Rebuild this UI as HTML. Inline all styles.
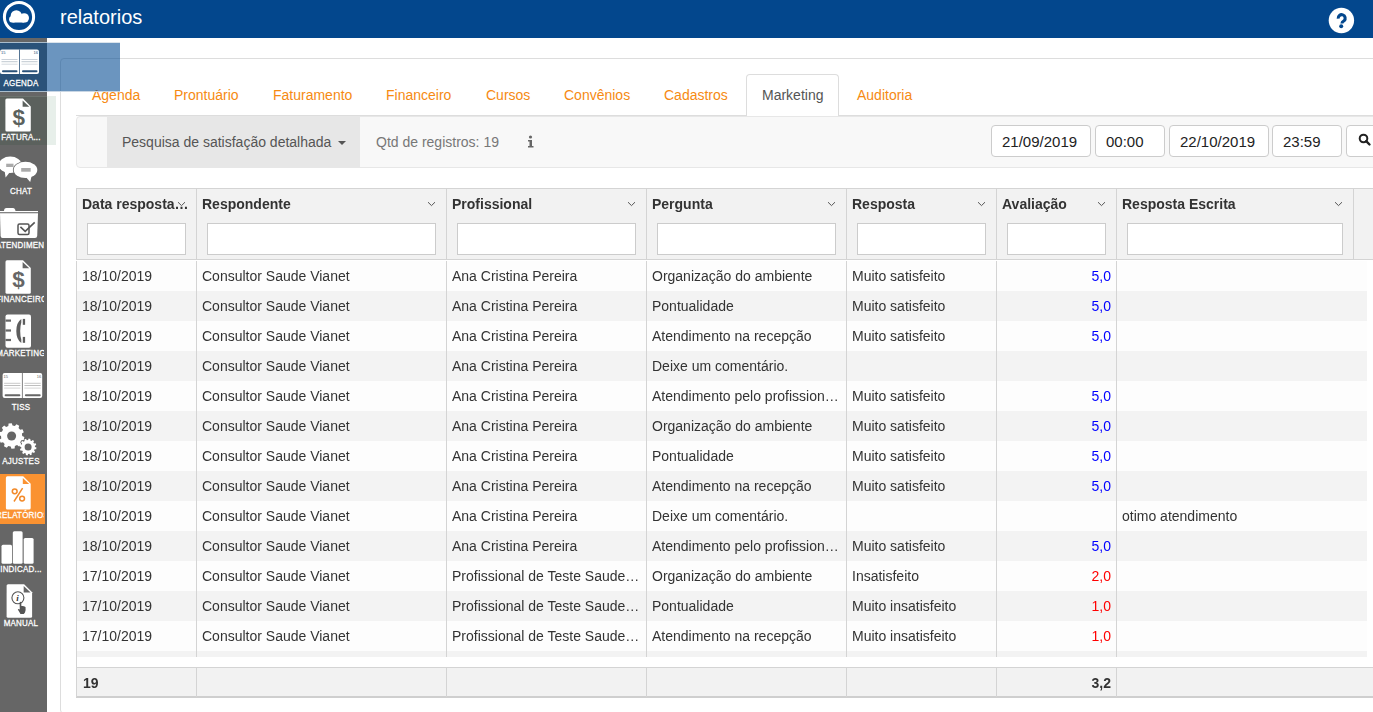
<!DOCTYPE html>
<html><head><meta charset="utf-8">
<style>
*{box-sizing:border-box;margin:0;padding:0}
html,body{width:1373px;height:712px;overflow:hidden;background:#fff;font-family:"Liberation Sans",sans-serif;color:#333;font-size:14px;position:relative}
.abs{position:absolute}
#hdr{left:0;top:0;width:1373px;height:38px;background:#03478d}
#hdr .title{left:60px;top:4px;font-size:20px;color:#fff;line-height:26px}
#side{left:0;top:38px;width:47px;height:674px;background:#666}
.sitem{position:absolute;left:0;width:47px;height:49px}
.slab{position:absolute;left:-4px;width:50px;text-align:center;font-size:8px;color:#fff;line-height:10px;white-space:nowrap;letter-spacing:0.2px;-webkit-text-stroke:0.25px #fff;transform:scaleY(1.12);transform-origin:50% 0}
#panel{left:60px;top:58px;width:1330px;height:656px;border:1px solid #ddd;border-radius:4px}
.tab{position:absolute;top:85px;line-height:20px;color:#f68a12;font-size:14px;white-space:nowrap}
#acttab{left:746px;top:74px;width:93px;height:42px;border:1px solid #ddd;border-bottom:0;border-radius:4px 4px 0 0;background:#fff}
#tabline{left:76px;top:115px;width:1297px;height:1px;background:#ddd}
#toolbar{left:76px;top:116px;width:1320px;height:52px;background:#f8f8f8;border:1px solid #e7e7e7;border-radius:4px}
#dd{left:107px;top:117px;width:253px;height:50px;background:#e7e7e7}
.inp{position:absolute;top:125px;height:32px;border:1px solid #ccc;border-radius:4px;background:#fff;font-size:15px;line-height:31px;color:#222}
#tbl{left:76px;top:188px;width:1310px;height:510px}
.hcell{position:absolute;top:189px;height:71px;background:#f2f2f2}
.htext{position:absolute;top:196px;font-weight:bold;font-size:14px;line-height:16px;color:#333;white-space:nowrap;overflow:hidden}
.finp{position:absolute;top:223px;height:32px;border:1px solid #ccc;background:#fff}
.row{position:absolute;left:77px;width:1290px;height:30px}
.cell{position:absolute;line-height:30px;white-space:nowrap;overflow:hidden;text-overflow:ellipsis;font-size:14px;color:#333}
.vsep{position:absolute;width:1px;background:#d4d4d4}
.b{color:#0000ff}.r{color:#ff0000}
.chev{position:absolute;top:200px;width:6px;height:6px;border-right:1px solid #555;border-bottom:1px solid #555;transform:rotate(45deg)}
.ftext{position:absolute;top:667px;line-height:30px;font-weight:bold;color:#333;white-space:nowrap}
</style></head>
<body>
<div id="hdr" class="abs">
  <svg class="abs" style="left:0;top:0" width="40" height="38" viewBox="0 0 40 38">
    <circle cx="19" cy="17" r="14.6" fill="none" stroke="#fff" stroke-width="3"/>
    <defs><clipPath id="cc"><rect x="0" y="0" width="40" height="22.7"/></clipPath></defs><g clip-path="url(#cc)" fill="#fff"><circle cx="12.6" cy="19.2" r="3.5"/><circle cx="16.3" cy="15.8" r="5.6"/><circle cx="24.2" cy="18" r="4.8"/><rect x="12.6" y="17" width="11.6" height="5.7"/></g>
  </svg>
  <div class="abs title">relatorios</div>
  <svg class="abs" style="left:1320px;top:0" width="45" height="38" viewBox="1320 0 45 38">
    <circle cx="1341.4" cy="20.5" r="12.7" fill="#fff"/>
    <path d="M1338.2 18.6 A3.5 3.5 0 1 1 1344.2 20.6 Q1341.9 21.8 1341.9 23.6" fill="none" stroke="#03478d" stroke-width="3.1"/>
    <circle cx="1341.2" cy="26.2" r="2" fill="#03478d"/>
  </svg>
</div>
<div id="side" class="abs"></div>
<!--SIDE--><svg class="abs" style="left:0;top:0" width="47" height="712" viewBox="0 0 47 712">
<defs><clipPath id="lc"><rect x="0" y="0" width="44" height="712"/></clipPath></defs>
<rect x="0" y="42" width="47" height="1" fill="#a9bccc"/>
<rect x="0" y="43" width="47" height="48" fill="#2a5279"/>
<rect x="0" y="96" width="47" height="49" fill="#5b615d"/>
<rect x="0" y="96" width="47" height="1" fill="#6c736e"/><rect x="0" y="91" width="47" height="1" fill="#a9bccc"/>
<rect x="0" y="474" width="45" height="50" fill="#fa9231"/>
<rect x="0" y="49.4" width="39" height="24.6" rx="2" fill="#fff"/><rect x="19.0" y="49.4" width="1" height="24.6" fill="#2a5279" opacity="0.8"/><rect x="1.5" y="59.0" width="16.0" height="1" fill="#8a9aaa" opacity="0.45"/><rect x="21.5" y="59.0" width="16.0" height="1" fill="#8a9aaa" opacity="0.45"/><rect x="1.5" y="61.2" width="16.0" height="1" fill="#8a9aaa" opacity="0.55"/><rect x="21.5" y="61.2" width="16.0" height="1" fill="#8a9aaa" opacity="0.55"/><rect x="1.5" y="63.7" width="16.0" height="1" fill="#8a9aaa" opacity="0.35"/><rect x="21.5" y="63.7" width="16.0" height="1" fill="#8a9aaa" opacity="0.35"/><rect x="2" y="70.3" width="15.5" height="2" rx="1" fill="#2a5279"/><rect x="22.0" y="70.3" width="15.5" height="2" rx="1" fill="#2a5279"/><text x="1" y="53.9" font-size="4" fill="#2a5279" font-family="Liberation Sans">15</text><text x="38" y="53.9" font-size="4" fill="#2a5279" text-anchor="end" font-family="Liberation Sans">16</text>
<path d="M6.9 98.6 H23.0 L30.8 106.39999999999999 V130.1 Q30.8 131.6 29.3 131.6 H6.9 Q5.4 131.6 5.4 130.1 V100.1 Q5.4 98.6 6.9 98.6Z" fill="#fff"/><path d="M22.6 100.39999999999999 V106.69999999999999 H29.3Z" fill="#5b615d"/>
<text x="18.85" y="124.8" text-anchor="middle" font-size="22.5" font-weight="bold" fill="#5b615d" font-family="Liberation Sans">$</text>
<ellipse cx="10.2" cy="164.8" rx="11.3" ry="8.3" fill="#fff"/><path d="M4.5 170 L10 172 L5.6 177.5Z" fill="#fff"/>
<rect x="6.2" y="163.7" width="7.3" height="3.3" fill="#aaa"/>
<ellipse cx="25.5" cy="169.9" rx="12.6" ry="8.8" fill="#666"/>
<ellipse cx="25.5" cy="169.9" rx="11.8" ry="8.1" fill="#fff"/><path d="M25 176 L31.5 176.5 L30.2 182Z" fill="#fff"/>
<rect x="21.2" y="168" width="9.5" height="3.7" fill="#aaa"/>
<path d="M4 211 Q4 208 6.5 208 H13 Q15 208 15.5 211Z" fill="#fff"/>
<rect x="0" y="211" width="38" height="1.2" fill="#fff"/>
<path d="M0 213.3 H38 L37.2 236 Q37 238 35 238 H2.5 Q0.7 238 0.6 236Z" fill="#fff"/>
<rect x="18" y="224" width="11" height="10.5" rx="1.5" fill="none" stroke="#555" stroke-width="1.5"/>
<path d="M20.4 226.8 L25.2 231.4 L34.7 222.3" fill="none" stroke="#555" stroke-width="1.6"/>
<path d="M7.0 260.2 H23.0 L30.8 268.0 V292.3 Q30.8 293.8 29.3 293.8 H7.0 Q5.5 293.8 5.5 292.3 V261.7 Q5.5 260.2 7.0 260.2Z" fill="#fff"/><path d="M22.6 262.0 V268.3 H29.3Z" fill="#666"/>
<text x="18.5" y="286.6" text-anchor="middle" font-size="22.5" font-weight="bold" fill="#666" font-family="Liberation Sans">$</text>
<rect x="5.5" y="314.6" width="25.5" height="33.2" rx="2" fill="#fff"/>
<rect x="5.5" y="319.5" width="5.5" height="2.2" fill="#666"/>
<rect x="5.5" y="329.4" width="5.5" height="2.2" fill="#666"/>
<rect x="5.5" y="338.9" width="5.5" height="2.2" fill="#666"/>
<path d="M21.3 319 Q16.3 322.5 16.3 331 Q16.3 339.5 21.3 343 L21.3 339.5 Q20.2 336 20.2 331 Q20.2 326 21.3 322.5Z" fill="#5d5d5d"/><rect x="22.8" y="318.9" width="2.3" height="5.9" fill="#5d5d5d"/><rect x="22.8" y="336.9" width="2.3" height="5.9" fill="#5d5d5d"/>
<rect x="2.6" y="373" width="39.6" height="25.100000000000023" rx="2" fill="#fff"/><rect x="21.900000000000002" y="373" width="1" height="25.100000000000023" fill="#666" opacity="0.8"/><rect x="4.1" y="382.8" width="16.3" height="1" fill="#888" opacity="0.45"/><rect x="24.400000000000002" y="382.8" width="16.3" height="1" fill="#888" opacity="0.45"/><rect x="4.1" y="385.0" width="16.3" height="1" fill="#888" opacity="0.55"/><rect x="24.400000000000002" y="385.0" width="16.3" height="1" fill="#888" opacity="0.55"/><rect x="4.1" y="387.6" width="16.3" height="1" fill="#888" opacity="0.35"/><rect x="24.400000000000002" y="387.6" width="16.3" height="1" fill="#888" opacity="0.35"/><rect x="4.6" y="394.3" width="15.8" height="2" rx="1" fill="#666"/><rect x="24.900000000000002" y="394.3" width="15.8" height="2" rx="1" fill="#666"/><text x="3.6" y="377.5" font-size="4" fill="#666" font-family="Liberation Sans">15</text><text x="41.2" y="377.5" font-size="4" fill="#666" text-anchor="end" font-family="Liberation Sans">16</text>
<path d="M22.20 436.00 L24.36 436.96 L23.72 440.11 L21.35 440.15 L20.18 442.23 L21.36 444.28 L18.99 446.45 L17.05 445.09 L14.88 446.08 L14.63 448.44 L11.44 448.80 L10.67 446.56 L8.32 446.08 L6.74 447.84 L3.95 446.26 L4.64 444.00 L3.02 442.23 L0.71 442.72 L-0.62 439.80 L1.27 438.38 L1.00 436.00 L-1.16 435.04 L-0.52 431.89 L1.85 431.85 L3.02 429.77 L1.84 427.72 L4.21 425.55 L6.15 426.91 L8.32 425.92 L8.57 423.56 L11.76 423.20 L12.53 425.44 L14.88 425.92 L16.46 424.16 L19.25 425.74 L18.56 428.00 L20.18 429.77 L22.49 429.28 L23.82 432.20 L21.93 433.62Z" fill="#fff"/><circle cx="11.6" cy="436" r="4.5" fill="#666"/>
<path d="M35.00 447.00 L36.48 447.53 L36.19 449.26 L34.62 449.27 L34.08 450.45 L35.10 451.65 L33.98 453.00 L32.61 452.22 L31.55 452.98 L31.83 454.52 L30.19 455.14 L29.39 453.78 L28.10 453.90 L27.57 455.38 L25.84 455.09 L25.83 453.52 L24.65 452.98 L23.45 454.00 L22.10 452.88 L22.88 451.51 L22.12 450.45 L20.58 450.73 L19.96 449.09 L21.32 448.29 L21.20 447.00 L19.72 446.47 L20.01 444.74 L21.58 444.73 L22.12 443.55 L21.10 442.35 L22.22 441.00 L23.59 441.78 L24.65 441.02 L24.37 439.48 L26.01 438.86 L26.81 440.22 L28.10 440.10 L28.63 438.62 L30.36 438.91 L30.37 440.48 L31.55 441.02 L32.75 440.00 L34.10 441.12 L33.32 442.49 L34.08 443.55 L35.62 443.27 L36.24 444.91 L34.88 445.71Z" fill="#fff"/><circle cx="28.1" cy="447" r="3.5" fill="#666"/>
<path d="M7.4 476.3 H23.2 L30.7 483.8 V508.1 Q30.7 509.6 29.2 509.6 H7.4 Q5.9 509.6 5.9 508.1 V477.8 Q5.9 476.3 7.4 476.3Z" fill="#fff"/><path d="M22.8 478.1 V484.1 H29.2Z" fill="#fa9231"/>
<circle cx="14.7" cy="491.3" r="2.4" fill="none" stroke="#f28a2a" stroke-width="1.5"/><circle cx="22.1" cy="498.6" r="2.4" fill="none" stroke="#f28a2a" stroke-width="1.5"/><path d="M22.6 488.2 L14 501.5" stroke="#f28a2a" stroke-width="1.5"/>
<rect x="1.5" y="544.8" width="10.5" height="19" rx="1.5" fill="#fff"/><rect x="12.8" y="531.3" width="9.8" height="32.5" rx="1.5" fill="#fff"/><rect x="23.7" y="537.9" width="9.9" height="25.9" rx="1.5" fill="#fff"/>
<path d="M8.1 584.2 H24.1 L32.1 592.2 V616.3 Q32.1 617.8 30.6 617.8 H8.1 Q6.6 617.8 6.6 616.3 V585.7 Q6.6 584.2 8.1 584.2Z" fill="#fff"/><path d="M23.700000000000003 586.0 V592.5 H30.6Z" fill="#666"/>
<circle cx="17.9" cy="597.8" r="6" fill="none" stroke="#555" stroke-width="1.1"/>
<text x="17.6" y="601.3" text-anchor="middle" font-size="9" font-style="italic" font-weight="bold" fill="#333" font-family="Liberation Serif">i</text>
<path d="M19.6 602.5 Q20.4 601 21.2 602.5 L21.4 606 Q23.5 605.5 25.5 607 Q26 610 25 612.5 L23.8 614 H20.5 L17.8 609.5 Q18.5 608.5 19.8 609.5Z" fill="#555"/>
</svg>
<div class="abs" style="left:0;top:0;width:44px;height:712px;overflow:hidden">
<div class="slab" style="top:77.7px">AGENDA</div>
<div class="slab" style="top:131.7px">FATURA...</div>
<div class="slab" style="top:185.7px">CHAT</div>
<div class="slab" style="top:239.7px">ATENDIMENTO</div>
<div class="slab" style="top:293.7px">FINANCEIRO</div>
<div class="slab" style="top:347.7px">MARKETING</div>
<div class="slab" style="top:401.7px">TISS</div>
<div class="slab" style="top:455.7px">AJUSTES</div>
<div class="slab" style="top:509.7px">RELATÓRIOS</div>
<div class="slab" style="top:563.7px">INDICAD...</div>
<div class="slab" style="top:617.7px">MANUAL</div>
</div><!--/SIDE-->
<div id="panel" class="abs"></div>

<div class="tab" style="left:92px">Agenda</div>
<div class="tab" style="left:174px">Prontuário</div>
<div class="tab" style="left:273px">Faturamento</div>
<div class="tab" style="left:386px">Financeiro</div>
<div class="tab" style="left:486px">Cursos</div>
<div class="tab" style="left:564px">Convênios</div>
<div class="tab" style="left:664px">Cadastros</div>
<div id="tabline" class="abs"></div>
<div id="acttab" class="abs"></div>
<div class="tab" style="left:762px;color:#555">Marketing</div>
<div class="tab" style="left:857px">Auditoria</div>

<div id="toolbar" class="abs"></div>
<div id="dd" class="abs"></div>
<div class="abs" style="left:122px;top:132px;line-height:20px;color:#555;white-space:nowrap">Pesquisa de satisfação detalhada</div>
<div class="abs" style="left:338px;top:141px;width:0;height:0;border-left:4px solid transparent;border-right:4px solid transparent;border-top:4px solid #555"></div>
<div class="abs" style="left:376px;top:132px;line-height:20px;color:#777;white-space:nowrap">Qtd de registros: 19</div>
<svg class="abs" style="left:526px;top:135px" width="10" height="13" viewBox="0 0 10 13"><circle cx="4.5" cy="2" r="1.6" fill="#666"/><path d="M2 5h4v6h1.5v1.5h-5.5v-1.5h1.5v-4.5h-1.5z" fill="#666"/></svg>
<div class="inp" style="left:991px;width:100px;padding-left:10px">21/09/2019</div>
<div class="inp" style="left:1095px;width:70px;padding-left:10px">00:00</div>
<div class="inp" style="left:1169px;width:100px;padding-left:10px">22/10/2019</div>
<div class="inp" style="left:1272px;width:70px;padding-left:10px">23:59</div>
<div class="inp" style="left:1346px;width:50px"></div>
<svg class="abs" style="left:1358px;top:133px" width="14" height="14" viewBox="0 0 14 14"><circle cx="5.5" cy="5.5" r="3.8" fill="none" stroke="#222" stroke-width="2"/><path d="M8.2 8.2l3.3 3.3" stroke="#222" stroke-width="2.4" stroke-linecap="round"/></svg>
<div style="position:absolute;left:0;top:0;width:1373px;height:712px;will-change:transform">
<div class="abs" style="left:76px;top:188px;width:1297px;height:72px;background:#f2f2f2;border-top:1px solid #d4d4d4;border-bottom:1px solid #d4d4d4"></div>
<div class="htext" style="left:82px;width:110px">Data resposta…</div>
<svg class="abs" style="left:177px;top:201px" width="9" height="6" viewBox="0 0 9 6"><path d="M1 1.2 L4.5 4.6 L8 1.2" fill="none" stroke="#555" stroke-width="1"/></svg>
<div class="finp" style="left:87px;width:99px"></div>
<div class="htext" style="left:202px;width:224px">Respondente</div>
<svg class="abs" style="left:427px;top:201px" width="9" height="6" viewBox="0 0 9 6"><path d="M1 1.2 L4.5 4.6 L8 1.2" fill="none" stroke="#555" stroke-width="1"/></svg>
<div class="finp" style="left:207px;width:229px"></div>
<div class="htext" style="left:452px;width:174px">Profissional</div>
<svg class="abs" style="left:627px;top:201px" width="9" height="6" viewBox="0 0 9 6"><path d="M1 1.2 L4.5 4.6 L8 1.2" fill="none" stroke="#555" stroke-width="1"/></svg>
<div class="finp" style="left:457px;width:179px"></div>
<div class="htext" style="left:652px;width:174px">Pergunta</div>
<svg class="abs" style="left:827px;top:201px" width="9" height="6" viewBox="0 0 9 6"><path d="M1 1.2 L4.5 4.6 L8 1.2" fill="none" stroke="#555" stroke-width="1"/></svg>
<div class="finp" style="left:657px;width:179px"></div>
<div class="htext" style="left:852px;width:124px">Resposta</div>
<svg class="abs" style="left:977px;top:201px" width="9" height="6" viewBox="0 0 9 6"><path d="M1 1.2 L4.5 4.6 L8 1.2" fill="none" stroke="#555" stroke-width="1"/></svg>
<div class="finp" style="left:857px;width:129px"></div>
<div class="htext" style="left:1002px;width:94px">Avaliação</div>
<svg class="abs" style="left:1097px;top:201px" width="9" height="6" viewBox="0 0 9 6"><path d="M1 1.2 L4.5 4.6 L8 1.2" fill="none" stroke="#555" stroke-width="1"/></svg>
<div class="finp" style="left:1007px;width:99px"></div>
<div class="htext" style="left:1122px;width:211px">Resposta Escrita</div>
<svg class="abs" style="left:1334px;top:201px" width="9" height="6" viewBox="0 0 9 6"><path d="M1 1.2 L4.5 4.6 L8 1.2" fill="none" stroke="#555" stroke-width="1"/></svg>
<div class="finp" style="left:1127px;width:216px"></div>
<div class="vsep" style="left:76px;top:188px;height:72px"></div>
<div class="vsep" style="left:196px;top:188px;height:72px"></div>
<div class="vsep" style="left:446px;top:188px;height:72px"></div>
<div class="vsep" style="left:646px;top:188px;height:72px"></div>
<div class="vsep" style="left:846px;top:188px;height:72px"></div>
<div class="vsep" style="left:996px;top:188px;height:72px"></div>
<div class="vsep" style="left:1116px;top:188px;height:72px"></div>
<div class="vsep" style="left:1353px;top:188px;height:72px"></div>
<div class="row" style="top:261px;background:#fdfdfd">
<div class="cell" style="left:5px;width:109px">18/10/2019</div>
<div class="cell" style="left:125px;width:239px">Consultor Saude Vianet</div>
<div class="cell" style="left:375px;width:189px">Ana Cristina Pereira</div>
<div class="cell" style="left:575px;width:189px">Organização do ambiente</div>
<div class="cell" style="left:775px;width:139px">Muito satisfeito</div>
<div class="cell b" style="left:926px;width:108px;text-align:right">5,0</div>
</div>
<div class="row" style="top:291px;background:#f3f3f3">
<div class="cell" style="left:5px;width:109px">18/10/2019</div>
<div class="cell" style="left:125px;width:239px">Consultor Saude Vianet</div>
<div class="cell" style="left:375px;width:189px">Ana Cristina Pereira</div>
<div class="cell" style="left:575px;width:189px">Pontualidade</div>
<div class="cell" style="left:775px;width:139px">Muito satisfeito</div>
<div class="cell b" style="left:926px;width:108px;text-align:right">5,0</div>
</div>
<div class="row" style="top:321px;background:#fdfdfd">
<div class="cell" style="left:5px;width:109px">18/10/2019</div>
<div class="cell" style="left:125px;width:239px">Consultor Saude Vianet</div>
<div class="cell" style="left:375px;width:189px">Ana Cristina Pereira</div>
<div class="cell" style="left:575px;width:189px">Atendimento na recepção</div>
<div class="cell" style="left:775px;width:139px">Muito satisfeito</div>
<div class="cell b" style="left:926px;width:108px;text-align:right">5,0</div>
</div>
<div class="row" style="top:351px;background:#f3f3f3">
<div class="cell" style="left:5px;width:109px">18/10/2019</div>
<div class="cell" style="left:125px;width:239px">Consultor Saude Vianet</div>
<div class="cell" style="left:375px;width:189px">Ana Cristina Pereira</div>
<div class="cell" style="left:575px;width:189px">Deixe um comentário.</div>
<div class="cell" style="left:775px;width:139px"></div>
</div>
<div class="row" style="top:381px;background:#fdfdfd">
<div class="cell" style="left:5px;width:109px">18/10/2019</div>
<div class="cell" style="left:125px;width:239px">Consultor Saude Vianet</div>
<div class="cell" style="left:375px;width:189px">Ana Cristina Pereira</div>
<div class="cell" style="left:575px;width:189px">Atendimento pelo profission…</div>
<div class="cell" style="left:775px;width:139px">Muito satisfeito</div>
<div class="cell b" style="left:926px;width:108px;text-align:right">5,0</div>
</div>
<div class="row" style="top:411px;background:#f3f3f3">
<div class="cell" style="left:5px;width:109px">18/10/2019</div>
<div class="cell" style="left:125px;width:239px">Consultor Saude Vianet</div>
<div class="cell" style="left:375px;width:189px">Ana Cristina Pereira</div>
<div class="cell" style="left:575px;width:189px">Organização do ambiente</div>
<div class="cell" style="left:775px;width:139px">Muito satisfeito</div>
<div class="cell b" style="left:926px;width:108px;text-align:right">5,0</div>
</div>
<div class="row" style="top:441px;background:#fdfdfd">
<div class="cell" style="left:5px;width:109px">18/10/2019</div>
<div class="cell" style="left:125px;width:239px">Consultor Saude Vianet</div>
<div class="cell" style="left:375px;width:189px">Ana Cristina Pereira</div>
<div class="cell" style="left:575px;width:189px">Pontualidade</div>
<div class="cell" style="left:775px;width:139px">Muito satisfeito</div>
<div class="cell b" style="left:926px;width:108px;text-align:right">5,0</div>
</div>
<div class="row" style="top:471px;background:#f3f3f3">
<div class="cell" style="left:5px;width:109px">18/10/2019</div>
<div class="cell" style="left:125px;width:239px">Consultor Saude Vianet</div>
<div class="cell" style="left:375px;width:189px">Ana Cristina Pereira</div>
<div class="cell" style="left:575px;width:189px">Atendimento na recepção</div>
<div class="cell" style="left:775px;width:139px">Muito satisfeito</div>
<div class="cell b" style="left:926px;width:108px;text-align:right">5,0</div>
</div>
<div class="row" style="top:501px;background:#fdfdfd">
<div class="cell" style="left:5px;width:109px">18/10/2019</div>
<div class="cell" style="left:125px;width:239px">Consultor Saude Vianet</div>
<div class="cell" style="left:375px;width:189px">Ana Cristina Pereira</div>
<div class="cell" style="left:575px;width:189px">Deixe um comentário.</div>
<div class="cell" style="left:775px;width:139px"></div>
<div class="cell" style="left:1045px;width:230px">otimo atendimento</div>
</div>
<div class="row" style="top:531px;background:#f3f3f3">
<div class="cell" style="left:5px;width:109px">18/10/2019</div>
<div class="cell" style="left:125px;width:239px">Consultor Saude Vianet</div>
<div class="cell" style="left:375px;width:189px">Ana Cristina Pereira</div>
<div class="cell" style="left:575px;width:189px">Atendimento pelo profission…</div>
<div class="cell" style="left:775px;width:139px">Muito satisfeito</div>
<div class="cell b" style="left:926px;width:108px;text-align:right">5,0</div>
</div>
<div class="row" style="top:561px;background:#fdfdfd">
<div class="cell" style="left:5px;width:109px">17/10/2019</div>
<div class="cell" style="left:125px;width:239px">Consultor Saude Vianet</div>
<div class="cell" style="left:375px;width:189px">Profissional de Teste Saude Vianet</div>
<div class="cell" style="left:575px;width:189px">Organização do ambiente</div>
<div class="cell" style="left:775px;width:139px">Insatisfeito</div>
<div class="cell r" style="left:926px;width:108px;text-align:right">2,0</div>
</div>
<div class="row" style="top:591px;background:#f3f3f3">
<div class="cell" style="left:5px;width:109px">17/10/2019</div>
<div class="cell" style="left:125px;width:239px">Consultor Saude Vianet</div>
<div class="cell" style="left:375px;width:189px">Profissional de Teste Saude Vianet</div>
<div class="cell" style="left:575px;width:189px">Pontualidade</div>
<div class="cell" style="left:775px;width:139px">Muito insatisfeito</div>
<div class="cell r" style="left:926px;width:108px;text-align:right">1,0</div>
</div>
<div class="row" style="top:621px;background:#fdfdfd">
<div class="cell" style="left:5px;width:109px">17/10/2019</div>
<div class="cell" style="left:125px;width:239px">Consultor Saude Vianet</div>
<div class="cell" style="left:375px;width:189px">Profissional de Teste Saude Vianet</div>
<div class="cell" style="left:575px;width:189px">Atendimento na recepção</div>
<div class="cell" style="left:775px;width:139px">Muito insatisfeito</div>
<div class="cell r" style="left:926px;width:108px;text-align:right">1,0</div>
</div>
<div class="row" style="top:651px;height:6px;background:#f3f3f3"></div>
<div class="vsep" style="left:76px;top:261px;height:396px"></div>
<div class="vsep" style="left:196px;top:261px;height:396px"></div>
<div class="vsep" style="left:446px;top:261px;height:396px"></div>
<div class="vsep" style="left:646px;top:261px;height:396px"></div>
<div class="vsep" style="left:846px;top:261px;height:396px"></div>
<div class="vsep" style="left:996px;top:261px;height:396px"></div>
<div class="vsep" style="left:1116px;top:261px;height:396px"></div>
<div class="vsep" style="left:76px;top:261px;height:410px"></div>
<div class="abs" style="left:76px;top:667px;width:1297px;height:31px;background:#f2f2f2;border-top:1px solid #d4d4d4;border-bottom:2px solid #cfcfcf"></div>
<div class="vsep" style="left:76px;top:667px;height:30px"></div>
<div class="vsep" style="left:196px;top:667px;height:30px"></div>
<div class="vsep" style="left:446px;top:667px;height:30px"></div>
<div class="vsep" style="left:646px;top:667px;height:30px"></div>
<div class="vsep" style="left:846px;top:667px;height:30px"></div>
<div class="vsep" style="left:996px;top:667px;height:30px"></div>
<div class="vsep" style="left:1116px;top:667px;height:30px"></div>
<div class="ftext" style="left:83px;top:668px">19</div>
<div class="ftext" style="left:1004px;top:668px;width:107px;text-align:right">3,2</div>
</div>
<!--OV--><div class="abs" style="left:47px;top:42px;width:73px;height:1px;background:#dbe4ec"></div><div class="abs" style="left:47px;top:91px;width:73px;height:1px;background:#c8d6e4"></div>
<div class="abs" style="left:47px;top:43px;width:73px;height:48px;background:rgba(0,72,145,0.58)"></div>
<div class="abs" style="left:47px;top:96px;width:9px;height:49px;background:#e7efea"></div><!--/OV-->
</body></html>
